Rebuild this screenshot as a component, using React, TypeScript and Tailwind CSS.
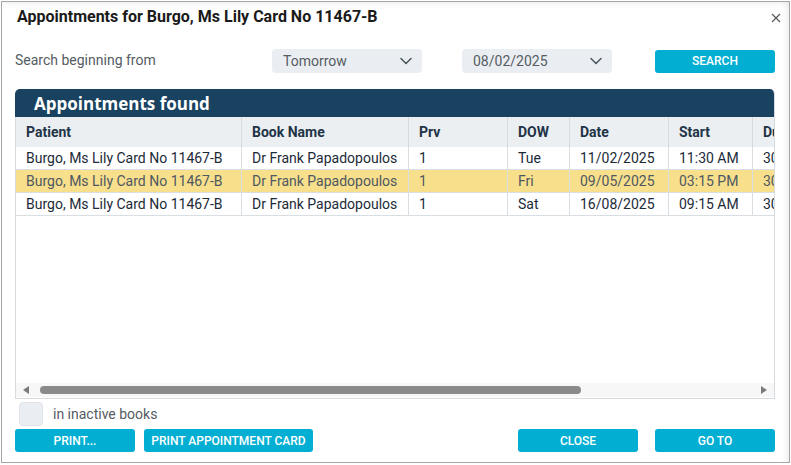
import React from "react";

const cols = [
  { name: "Patient", w: 225 },
  { name: "Book Name", w: 167 },
  { name: "Prv", w: 99 },
  { name: "DOW", w: 62 },
  { name: "Date", w: 99 },
  { name: "Start", w: 84 },
  { name: "Duration", w: 80 },
];

const rows = [
  { cells: ["Burgo, Ms Lily Card No 11467-B", "Dr Frank Papadopoulos", "1", "Tue", "11/02/2025", "11:30 AM", "30"], sel: false },
  { cells: ["Burgo, Ms Lily Card No 11467-B", "Dr Frank Papadopoulos", "1", "Fri", "09/05/2025", "03:15 PM", "30"], sel: true },
  { cells: ["Burgo, Ms Lily Card No 11467-B", "Dr Frank Papadopoulos", "1", "Sat", "16/08/2025", "09:15 AM", "30"], sel: false },
];

function Chevron() {
  return (
    <svg width="12" height="8" viewBox="0 0 12 8" fill="none">
      <path d="M1 1.5 L6 6.5 L11 1.5" stroke="#4b5560" strokeWidth="1.5" strokeLinecap="round" strokeLinejoin="round" />
    </svg>
  );
}

function Select({ value }: { value: string }) {
  return (
    <div className="w-[150px] h-[24px] rounded-[4px] bg-[#eaeef2] flex items-center justify-between pl-[11px] pr-[10px]">
      <span className="text-[14px] text-[#555c63]">{value}</span>
      <Chevron />
    </div>
  );
}

function Btn({ label, w }: { label: string; w: string }) {
  return (
    <div className={`${w} h-[23px] rounded-[3px] bg-[#02afd2] flex items-center justify-center text-white text-[12px] font-medium`}>
      {label}
    </div>
  );
}

export default function App() {
  return (
    <div className="w-[791px] h-[465px] bg-white pt-[1px] pl-[1px]" style={{ fontFamily: "Roboto, 'Liberation Sans', sans-serif" }}>
      <div className="w-[789px] h-[462px] border border-[#a6a6a6] bg-white shadow-[inset_-6px_0_6px_-4px_rgba(0,0,0,0.08),inset_0_6px_6px_-4px_rgba(0,0,0,0.06)] flex flex-col pl-[13px] pr-[14px]">
        {/* Title */}
        <div className="flex items-start justify-between h-[41px] pt-[5px]">
          <div className="pl-[2px] text-[16px] leading-5 font-bold text-[#1a1a1a]">
            Appointments for Burgo, Ms Lily Card No 11467-B
          </div>
          <svg width="10" height="10" viewBox="0 0 10 10" className="mt-[6px] mr-[-6px]">
            <path d="M1 1 L9 9 M9 1 L1 9" stroke="#555" strokeWidth="1.1" />
          </svg>
        </div>
        {/* Search row */}
        <div className="flex items-center h-[24px] mt-[6px]">
          <div className="w-[257px] text-[14px] text-[#555c63] -mt-[2px]">Search beginning from</div>
          <Select value="Tomorrow" />
          <div className="w-[40px]" />
          <Select value="08/02/2025" />
          <div className="w-[43px]" />
          <Btn label="SEARCH" w="w-[120px]" />
        </div>
        {/* Panel */}
        <div className="mt-[16px] w-[760px] h-[310px] flex flex-col rounded-t-[5px] overflow-hidden border-b border-r border-[#d6dbe0]">
          <div className="h-[28px] bg-[#18425f] flex items-center pl-[19px]">
            <span className="text-white text-[17px] font-bold leading-none" style={{ fontFamily: "'Open Sans', sans-serif" }}>
              Appointments found
            </span>
          </div>
          <div className="flex-1 flex flex-col border-l border-[#d6dbe0] overflow-hidden">
            <div className="flex h-[30px] bg-[#ebeff2] shrink-0">
              {cols.map((c, i) => (
                <div
                  key={c.name}
                  className={`h-full shrink-0 flex items-center pl-[10px] text-[14px] font-bold text-[#223447] overflow-hidden whitespace-nowrap ${i > 0 ? "border-l border-[#d6dbe0]" : ""}`}
                  style={{ width: c.w }}
                >
                  {c.name}
                </div>
              ))}
            </div>
            {rows.map((r, ri) => (
              <div
                key={ri}
                className={`flex h-[23px] shrink-0 border-b border-[#d9dee3] ${r.sel ? "bg-[#f8df8b] text-[#4e5863]" : "bg-white text-[#1c2a38]"}`}
              >
                {r.cells.map((cell, ci) => (
                  <div
                    key={ci}
                    className={`h-full shrink-0 flex items-center pl-[10px] text-[14px] overflow-hidden whitespace-nowrap ${ci > 0 ? "border-l border-[#d9dee3]" : ""}`}
                    style={{ width: cols[ci].w }}
                  >
                    {cell}
                  </div>
                ))}
              </div>
            ))}
            <div className="flex-1" />
            {/* Scrollbar */}
            <div className="h-[14px] bg-[#f7f7f7] flex items-center px-[7px] gap-[6px] mb-[1px]">
              <svg width="6" height="8" viewBox="0 0 6 8"><path d="M6 0 L0 4 L6 8 Z" fill="#7a7a7a" /></svg>
              <div className="flex-1 h-[8px] relative">
                <div className="absolute left-[5px] top-0 h-[8px] w-[541px] rounded-full bg-[#8a8a8a]" />
              </div>
              <svg width="6" height="8" viewBox="0 0 6 8"><path d="M0 0 L6 4 L0 8 Z" fill="#7a7a7a" /></svg>
            </div>
          </div>
        </div>
        {/* Checkbox */}
        <div className="flex items-center mt-[3px] h-[24px] pl-[4px]">
          <div className="w-[24px] h-[24px] rounded-[4px] bg-[#eaeef2] border border-[#e0e4e8]" />
          <span className="ml-[10px] text-[14px] text-[#555c63]">in inactive books</span>
        </div>
        {/* Buttons */}
        <div className="flex items-center mt-[3px]">
          <Btn label="PRINT..." w="w-[120px]" />
          <div className="w-[9px]" />
          <Btn label="PRINT APPOINTMENT CARD" w="w-[169px]" />
          <div className="flex-1" />
          <Btn label="CLOSE" w="w-[120px]" />
          <div className="w-[17px]" />
          <Btn label="GO TO" w="w-[120px]" />
        </div>
      </div>
    </div>
  );
}
